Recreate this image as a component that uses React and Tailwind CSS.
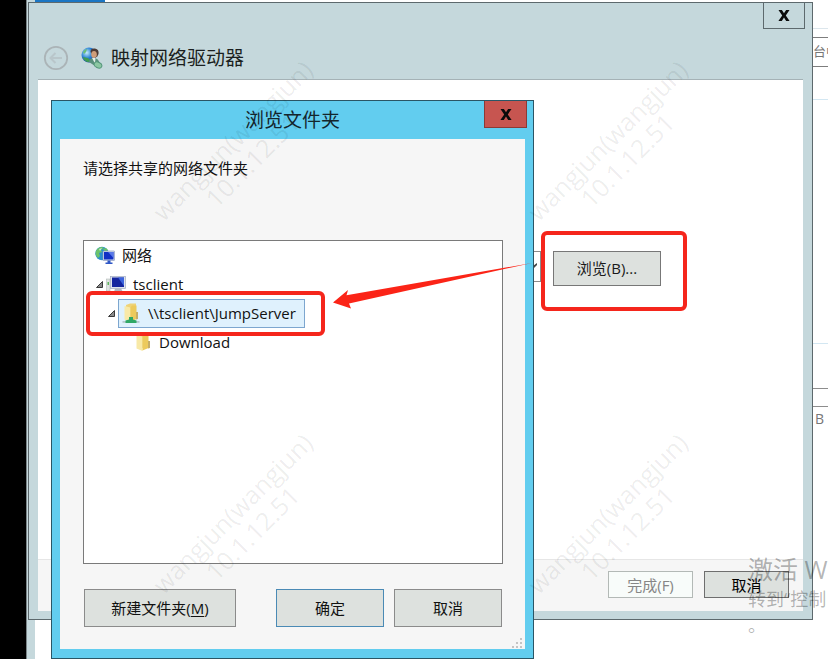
const FONT = "font-['Open_Sans','Noto_Sans_CJK_SC',sans-serif]";

function CloseGlyph() {
  return (
    <svg viewBox="0 0 12 11" className="h-[11px] w-3" aria-hidden="true">
      <path d="M0.5 0h3.4L6 3.3 8.1 0h3.4L7.8 5.4 11.6 11H8.2L6 7.6 3.8 11H0.4L4.2 5.4z" fill="#0b0b0b" />
    </svg>
  );
}

function BackIcon() {
  return (
    <svg viewBox="0 0 26 26" className="h-[26px] w-[26px]" fill="none" aria-hidden="true">
      <circle cx="13" cy="13" r="11.2" stroke="#abb4b7" strokeWidth="1.800" />
      <path d="M19 13H8M12.500 8L7.500 13l5 5" stroke="#b9c6ca" strokeWidth="2" />
    </svg>
  );
}

function MapDriveIcon() {
  return (
    <svg viewBox="0 0 22 22" className="h-[22px] w-[22px]" aria-hidden="true">
      <defs>
        <radialGradient id="globe" cx="0.35" cy="0.35" r="0.7">
          <stop offset="0" stopColor="#c8ecf9" />
          <stop offset="0.5" stopColor="#2f86d6" />
          <stop offset="1" stopColor="#123a94" />
        </radialGradient>
      </defs>
      <circle cx="8" cy="8" r="7.500" fill="url(#globe)" />
      <path d="M2 10c2 0 3 1 5 1l2 2-1 2C5 15 2.500 13 2 10z" fill="#3f9c52" />
      <path d="M2 5c1-2 3-3 4-3L5 5 3 7z" fill="#6cbf74" />
      <path d="M9.500 5c0-3 2-4 4.500-3.500C17 2 18 4 17.500 7L16 10h-3z" fill="#4d3a35" />
      <ellipse cx="13" cy="7.500" rx="2.800" ry="3.500" fill="#cf9d79" />
      <path d="M8 15c0-3 2-4 5-4 3 0 5 2 6 6l-5 2z" fill="#5a8f7c" />
      <path d="M11 11l3 5.500 0.500-5.500z" fill="#e3efe9" />
      <ellipse cx="17" cy="18" rx="4" ry="2.800" fill="#8cc7a2" stroke="#55977b" transform="rotate(25 17 18)" />
    </svg>
  );
}

function NetworkIcon() {
  return (
    <svg viewBox="0 0 20 19" className="h-[19px] w-5" aria-hidden="true">
      <circle cx="7" cy="7.500" r="6.700" fill="#2c8fce" />
      <path d="M1 5c1-2 3-4 6-4l2 1-3 2 1 2-3 1 1 3-2 2C1 10 0 8 1 5zM8 3l3-1 2 2-3 2z" fill="#6cc36b" />
      <path d="M4 3l3-1-2 3z" fill="#c9ecd9" />
      <rect x="8" y="5" width="11.500" height="9.500" rx="0.500" fill="#d5dfef" stroke="#7d8fb5" strokeWidth="0.600" />
      <rect x="9" y="6" width="9.500" height="7.500" fill="#1230c4" />
      <path d="M13 6h5.500v6z" fill="#5878e8" />
      <path d="M12.500 14.500h3v2h2v1.500h-7v-1.500h2z" fill="#2f57c6" />
    </svg>
  );
}

function ComputerIcon() {
  return (
    <svg viewBox="0 0 20 17" className="h-[17px] w-5" aria-hidden="true">
      <rect x="0.500" y="3" width="3.500" height="12" fill="#dfe4e2" stroke="#a9b1ae" strokeWidth="0.500" />
      <rect x="1.500" y="6" width="1.500" height="3" fill="#5db45c" />
      <rect x="4.500" y="0.500" width="15" height="12" fill="#dde3ee" stroke="#a1abc0" strokeWidth="0.700" />
      <rect x="6" y="1.500" width="12" height="9.500" fill="#14259f" />
      <path d="M12 1.500h6V10z" fill="#3c64dd" />
      <path d="M9 12.500h6l2 3.500H8z" fill="#b1b8c2" />
    </svg>
  );
}

function FolderIcon({ shared }) {
  return (
    <svg viewBox="0 0 18 21" className="h-[21px] w-[18px]" aria-hidden="true">
      <path d="M4 2L8 0.500h6V16H4z" fill="#eed378" />
      <path d="M2.500 3l6 1.500V19l-6-2.500z" fill="#f8e9a7" />
      <path d="M8.500 4.500L10 2.500h4.500V16l-6 2.500z" fill="#ecca5c" />
      <path d="M14 9h2v7l-2 0.500z" fill="#c4ad68" />
      {shared && (
        <>
          <path d="M0.500 18h17v1.800h-17z" fill="#b3c8ce" />
          <path d="M7 14h4v2.500l3.500 1V20h-11v-2.500l3.500-1z" fill="#2fa866" />
        </>
      )}
    </svg>
  );
}

function Expander() {
  return (
    <svg viewBox="0 0 9 9" className="h-[9px] w-[9px]" aria-hidden="true">
      <path d="M7.500 1.500v6h-6z" fill="#8a8a8a" stroke="#3a3a3a" />
    </svg>
  );
}

function ResizeGrip() {
  return (
    <svg viewBox="0 0 12 12" className="h-3 w-3" fill="#c4c4c4" aria-hidden="true">
      <path d="M9 1h2v2H9zM9 5h2v2H9zM9 9h2v2H9zM5 5h2v2H5zM5 9h2v2H5zM1 9h2v2H1z" />
    </svg>
  );
}

function Watermark({ className }) {
  return (
    <div
      className={`pointer-events-none absolute flex h-14 w-[240px] -rotate-45 flex-col items-center whitespace-nowrap text-[25px] leading-7 text-black/8 select-none ${className}`}
    >
      <span>wangjun(wangjun)</span>
      <span>10.1.12.51</span>
    </div>
  );
}

function BackgroundWindow() {
  return (
    <div className="flex h-full">
      <div className="w-[26px] bg-black" />
      <div className="w-[9px] border-l border-[#7b8588] bg-[#c5d8dc]" />
      <div className="flex flex-1 justify-between">
        <div className="h-[2px] w-[70px] bg-[#1b76c4]" />
        <div className="w-[15px] overflow-hidden whitespace-nowrap text-[#777]">
          <div className="h-[29px] border-b border-[#dce6ec]" />
          <div className="mt-2 h-[30px] border-y border-[#7d7d7d] text-[13px] leading-[26px]">台中</div>
          <div className="mt-8 h-[245px] border-y border-[#d3e7f2]" />
          <div className="mt-11 h-[19px] border-y border-[#8d8d8d]" />
          <div className="px-0.5 text-sm leading-6">B</div>
        </div>
      </div>
    </div>
  );
}

function MapDriveWindow() {
  return (
    <section className="absolute top-[2px] right-[15px] bottom-[39px] left-[28px] flex flex-col border border-[#5d696d] bg-[#c5d8dc] px-[9px] pb-2">
      <header className="flex items-start justify-between">
        <div className="flex items-center gap-3 pt-[41px] pb-[7px] pl-[5px]">
          <button type="button" aria-label="返回" disabled>
            <BackIcon />
          </button>
          <div className="flex items-center gap-2">
            <MapDriveIcon />
            <h1 className="text-[19px] leading-7 text-[#1b1f20]">映射网络驱动器</h1>
          </div>
        </div>
        <button
          type="button"
          aria-label="关闭"
          className="-mr-0.5 flex h-[26px] w-[42px] items-center justify-center border border-t-0 border-[#5d696d]"
        >
          <CloseGlyph />
        </button>
      </header>
      <div className="flex-1 border-t border-[#a5b2b6] bg-white pt-[171px]">
        <div className="flex items-start gap-3 pl-[103px]">
          <div className="relative">
            <select
              aria-label="文件夹"
              className="h-[31px] w-[400px] appearance-none border border-[#8a8a8a] bg-white"
            />
            <svg viewBox="0 0 8 6" className="absolute top-3 right-1 h-1.5 w-2" aria-hidden="true">
              <path d="M0 0l4 3 4-3v2L4 6 0 2z" fill="#444" />
            </svg>
          </div>
          <button
            type="button"
            className="h-[35px] w-[108px] border border-[#777] bg-[#dde1de] text-[15px] text-[#1a1a1a]"
          >
            浏览(B)...
          </button>
        </div>
      </div>
      <footer className="flex justify-end gap-[11px] border-t border-[#e6e6e6] bg-[#f6f6f6] px-[14px] pt-[11px] pb-[13px] text-[15px]">
        <button type="button" disabled className="h-[27px] w-[85px] border border-[#b3b9b6] bg-[#f8fcfa] leading-6 text-[#868686]">
          完成(F)
        </button>
        <button type="button" className="h-[27px] w-[85px] border border-[#6e6e6e] bg-[#dde1de] leading-6 text-black">
          取消
        </button>
      </footer>
    </section>
  );
}

function TreeRow({ className, expander, icon, label, selected }) {
  return (
    <li className={`flex h-[29px] items-center ${className}`}>
      {expander && <Expander />}
      <span
        className={
          selected
            ? "ml-0.5 flex h-[29px] items-center gap-2 border border-[#7da6cf] bg-[#dff1fd] pr-2 pl-[3px]"
            : "ml-0.5 flex items-center gap-[7px]"
        }
      >
        {icon}
        {label}
      </span>
    </li>
  );
}

function BrowseDialog() {
  return (
    <section className="absolute top-[100px] bottom-0 left-[51px] flex w-[483px] flex-col border border-[#2a5666] bg-[#62cdef] px-2 pb-[9px]">
      <header className="grid h-[38px] grid-cols-[1fr_auto_1fr] items-start">
        <h2 className="col-start-2 text-[19px] leading-[38px] text-[#14262d]">浏览文件夹</h2>
        <button
          type="button"
          aria-label="关闭"
          className="-mr-0.5 flex h-[27px] w-[43px] items-center justify-center justify-self-end border border-t-0 border-[#8c3a36] bg-[#c75550]"
        >
          <CloseGlyph />
        </button>
      </header>
      <div className="flex flex-1 flex-col bg-[#f6f6f6] pt-[17px] pr-[22px] pl-[23px] text-[15px] text-[#111]">
        <p className="leading-6">请选择共享的网络文件夹</p>
        <ul className="mt-[60px] flex-1 border border-[#7a7a7a] bg-white">
          <TreeRow className="pl-[9px]" icon={<NetworkIcon />} label="网络" />
          <TreeRow className="pl-[11px]" expander icon={<ComputerIcon />} label="tsclient" />
          <TreeRow className="pl-[23px]" expander selected icon={<FolderIcon shared />} label="\\tsclient\JumpServer" />
          <TreeRow className="pl-12" icon={<FolderIcon />} label="Download" />
        </ul>
        <div className="mt-[25px] flex gap-[10px] px-px">
          <button type="button" className="mr-auto h-[38px] w-[152px] border border-[#8b8b8b] bg-[#dde1de]">
            新建文件夹(<u className="underline-offset-2">M</u>)
          </button>
          <button type="button" className="h-[38px] w-[108px] border border-[#4a8ab5] bg-[#dde1de]">
            确定
          </button>
          <button type="button" className="h-[38px] w-[108px] border border-[#8b8b8b] bg-[#dde1de]">
            取消
          </button>
        </div>
        <div className="-mr-5 flex h-[22px] items-end justify-end">
          <ResizeGrip />
        </div>
      </div>
    </section>
  );
}

function ActivationNotice() {
  return (
    <div className="pointer-events-none absolute top-[553px] left-[748px] whitespace-nowrap text-black/30">
      <p className="text-[25px] leading-8">激活 W</p>
      <p className="text-[18px] leading-7">转到“控制</p>
      <p className="text-[18px] leading-6">。</p>
    </div>
  );
}

function Annotations() {
  return (
    <>
      <div className="pointer-events-none absolute top-[291px] left-[86px] h-[45px] w-[239px] rounded-md border-4 border-[#f5261c]" />
      <div className="pointer-events-none absolute top-[231px] left-[541px] h-[80px] w-[146px] rounded-md border-4 border-[#f5261c]" />
      <svg viewBox="0 0 200 48" className="pointer-events-none absolute top-[262px] left-[333px] h-12 w-[200px]" aria-hidden="true">
        <path d="M0 40.500L15 28l-1.500 5.300L199 1 16 41.500 18 46.500z" fill="#fb2417" />
      </svg>
    </>
  );
}

export default function App() {
  return (
    <main className={`relative h-screen overflow-hidden bg-white ${FONT}`}>
      <BackgroundWindow />
      <MapDriveWindow />
      <BrowseDialog />
      <Watermark className="top-[122px] left-[122px]" />
      <Watermark className="top-[122px] left-[497px]" />
      <Watermark className="top-[495px] left-[122px]" />
      <Watermark className="top-[495px] left-[497px]" />
      <ActivationNotice />
      <Annotations />
    </main>
  );
}
